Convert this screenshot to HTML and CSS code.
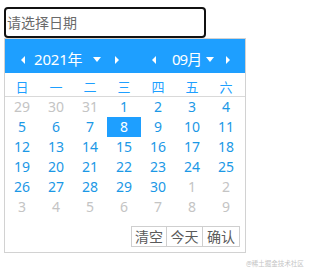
FILE: index.html
```html
<!DOCTYPE html>
<html lang="zh-CN">
<head>
<meta charset="utf-8">
<link rel="stylesheet" href="styles.css">
</head>
<body>
<div class="wrap">
  <input class="date-input" type="text" placeholder="请选择日期">
  <div class="picker">
    <div class="picker-head">
      <span class="tri-left y-prev"></span>
      <span class="head-text year-text">2021年</span>
      <span class="caret"></span>
      <span class="tri-right y-next"></span>
      <span class="tri-left m-prev"></span>
      <span class="head-text month-text">09月</span>
      <span class="caret month-caret"></span>
      <span class="tri-right m-next"></span>
    </div>
    <div class="weekdays">
      <span>日</span><span>一</span><span>二</span><span>三</span><span>四</span><span>五</span><span>六</span>
    </div>
    <div class="days">
      <span class="muted">29</span><span class="muted">30</span><span class="muted">31</span><span>1</span><span>2</span><span>3</span><span>4</span>
      <span>5</span><span>6</span><span>7</span><span class="selected">8</span><span>9</span><span>10</span><span>11</span>
      <span>12</span><span>13</span><span>14</span><span>15</span><span>16</span><span>17</span><span>18</span>
      <span>19</span><span>20</span><span>21</span><span>22</span><span>23</span><span>24</span><span>25</span>
      <span>26</span><span>27</span><span>28</span><span>29</span><span>30</span><span class="muted">1</span><span class="muted">2</span>
      <span class="muted">3</span><span class="muted">4</span><span class="muted">5</span><span class="muted">6</span><span class="muted">7</span><span class="muted">8</span><span class="muted">9</span>
    </div>
    <div class="picker-foot">
      <span class="btn btn-clear">清空</span><span class="btn btn-today">今天</span><span class="btn btn-ok">确认</span>
    </div>
  </div>
</div>
<div class="watermark">@稀土掘金技术社区</div>
</body>
</html>
```
FILE: styles.css
```css
html, body {
  margin: 0;
  padding: 0;
  background: #fff;
}
body {
  width: 312px;
  height: 277px;
  position: relative;
  font-family: "Noto Sans", "Noto Sans CJK SC", sans-serif;
  overflow: hidden;
}
.wrap {
  padding: 7px 0 0 4px;
}
.date-input {
  display: block;
  box-sizing: border-box;
  width: 202px;
  height: 31px;
  margin: 0;
  padding: 0 0 0 1px;
  border: 2px solid #111;
  border-radius: 4px;
  outline: none;
  font-family: "Noto Sans", "Noto Sans CJK SC", sans-serif;
  font-size: 14px;
  color: #333;
  background: #fff;
}
.date-input::placeholder {
  color: #6a6a6a;
}
.picker {
  box-sizing: border-box;
  width: 242px;
  border: 1px solid #d2d2d2;
  background: #fff;
}
.picker-head {
  height: 34px;
  box-sizing: border-box;
  padding-top: 7px;
  background: #1e9fff;
  display: flex;
  align-items: center;
  color: #fff;
  font-size: 15px;
  line-height: 27px;
}
.tri-left {
  width: 0;
  height: 0;
  border-right: 4px solid #fff;
  border-top: 4px solid transparent;
  border-bottom: 4px solid transparent;
}
.tri-right {
  width: 0;
  height: 0;
  border-left: 4px solid #fff;
  border-top: 4px solid transparent;
  border-bottom: 4px solid transparent;
}
.caret {
  width: 0;
  height: 0;
  border-top: 5px solid #fff;
  border-left: 4px solid transparent;
  border-right: 4px solid transparent;
}
.head-text {
  white-space: nowrap;
}
.y-prev { margin-left: 16px; }
.year-text { margin-left: 9px; width: 48px; letter-spacing: -0.2px; }
.picker-head .caret { margin-left: 11px; }
.y-next { margin-left: 14px; }
.m-prev { margin-left: 33px; }
.month-text { margin-left: 16px; width: 29px; letter-spacing: -1px; }
.picker-head .month-caret { margin-left: 5px; }
.m-next { margin-left: 12px; }

.weekdays {
  display: grid;
  grid-template-columns: repeat(7, 34px);
  padding-top: 5px;
  height: 18px;
  line-height: 18px;
  border-bottom: 1px solid #d9d9d9;
  font-size: 13px;
  color: #1e9fff;
  text-align: center;
}
.days {
  display: grid;
  grid-template-columns: repeat(7, 34px);
  grid-auto-rows: 20px;
  font-size: 14px;
  line-height: 20px;
  color: #1b98e6;
  text-align: center;
}
.days .muted {
  color: #c4c4c4;
}
.days .selected {
  background: #1e9fff;
  color: #fff;
}
.picker-foot {
  display: flex;
  justify-content: flex-end;
  padding: 9px 5px 5px 0;
}
.btn {
  box-sizing: border-box;
  height: 21px;
  border: 1px solid #cfcfcf;
  margin-left: -1px;
  font-size: 14px;
  line-height: 19px;
  text-align: center;
  color: #5a5a5a;
  background: #fff;
}
.btn-clear { width: 36px; }
.btn-today { width: 37px; }
.btn-ok { width: 38px; }
.watermark {
  position: absolute;
  left: 246px;
  top: 259px;
  font-size: 6.5px;
  line-height: 10px;
  color: #c4c4c4;
  white-space: nowrap;
}
```
